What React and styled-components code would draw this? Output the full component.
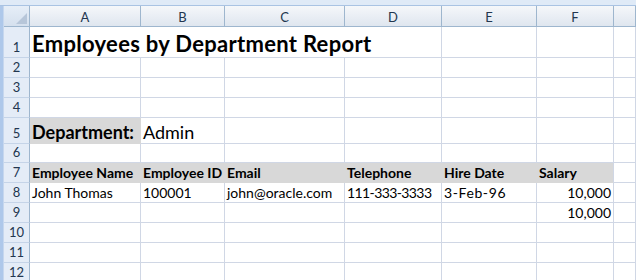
import React from "react";
import styled, { createGlobalStyle } from "styled-components";

const Global = createGlobalStyle`
  html, body { margin: 0; padding: 0; background: #ffffff; }
  body { font-family: "Lato", "Liberation Sans", sans-serif; overflow: hidden; }
  * { box-sizing: border-box; }
`;

const GRID = "#d0d7e5";
const HEAD_BORDER = "#9eb6ce";
const FILL = "#d8d8d8";

const Sheet = styled.div`
  display: grid;
  width: 636px;
  height: 280px;
  overflow: hidden;
  grid-template-columns: 4px 26px 111px 84px 120px 97px 95px 77px 1fr;
  grid-template-rows: 6px 21px 31px 20px 20px 20px 26px 19px 20px 20px 20px 20px 20px 20px;
`;

const TopStrip = styled.div`
  grid-column: 1 / -1;
  grid-row: 1;
  background: #dfeaf7;
  border-bottom: 1px solid #a9c3e3;
`;

const SideStrip = styled.div`
  grid-column: 1;
  grid-row: 2 / -1;
  background: #aec8ea;
  border-right: 1px solid #c6d7ee;
`;

const Corner = styled.div`
  position: relative;
  grid-column: 2;
  grid-row: 2;
  background: linear-gradient(#e6eef8, #d5e0ee);
  border-right: 1px solid ${HEAD_BORDER};
  border-bottom: 1px solid ${HEAD_BORDER};
`;

const CornerMark = styled.svg`
  position: absolute;
  right: 2px;
  bottom: 2px;
`;

const ColHead = styled.div`
  display: flex;
  align-items: center;
  justify-content: center;
  grid-row: 2;
  background: linear-gradient(#f5f7fa, #dfe6ef);
  border-right: 1px solid ${HEAD_BORDER};
  border-bottom: 1px solid ${HEAD_BORDER};
  color: #22364f;
  font-size: 13px;
  padding-top: 1px;
`;

const RowHead = styled.div`
  display: flex;
  align-items: flex-end;
  justify-content: center;
  grid-column: 2;
  background: #e4ecf7;
  border-right: 1px solid ${HEAD_BORDER};
  border-bottom: 1px solid #c5d4e8;
  color: #22364f;
  font-size: 13px;
  line-height: 1;
  padding-bottom: 3px;
`;

const Cell = styled.div`
  display: flex;
  align-items: flex-end;
  justify-content: ${(p) => (p.$right ? "flex-end" : "flex-start")};
  grid-column: ${(p) => (p.$span ? `span ${p.$span}` : "auto")};
  background: ${(p) => (p.$fill ? FILL : "#ffffff")};
  border-right: 1px solid ${(p) => (p.$fill && !p.$edge ? FILL : GRID)};
  border-bottom: 1px solid ${(p) => (p.$fill ? FILL : GRID)};
  padding: 0 2px 2px 2px;
  color: #000000;
  font-size: ${(p) => p.$size || 14}px;
  font-weight: ${(p) => (p.$bold ? 700 : 400)};
  letter-spacing: ${(p) => p.$track || 0}px;
  line-height: 1;
  white-space: nowrap;
  overflow: visible;
`;

const cols = ["A", "B", "C", "D", "E", "F", ""];
const blank = () => [{}, {}, {}, {}, {}, {}, {}];

const rows = [
  {
    n: 1,
    cells: [
      { t: "Employees by Department Report", bold: true, size: 22, track: 0.3, span: 4 },
      {}, {}, {},
    ],
  },
  { n: 2 },
  { n: 3 },
  { n: 4 },
  {
    n: 5,
    cells: [
      { t: "Department:", bold: true, size: 18, fill: true },
      { t: "Admin", size: 18 },
      {}, {}, {}, {}, {},
    ],
  },
  { n: 6 },
  {
    n: 7,
    cells: [
      { t: "Employee Name", bold: true, fill: true },
      { t: "Employee ID", bold: true, fill: true },
      { t: "Email", bold: true, fill: true },
      { t: "Telephone", bold: true, fill: true },
      { t: "Hire Date", bold: true, fill: true },
      { t: "Salary", bold: true, fill: true, edge: true },
      {},
    ],
  },
  {
    n: 8,
    cells: [
      { t: "John Thomas" },
      { t: "100001" },
      { t: "john@oracle.com" },
      { t: "111-333-3333", track: -0.6 },
      { t: "3-Feb-96", track: 0.6 },
      { t: "10,000", right: true },
      {},
    ],
  },
  { n: 9, cells: [{}, {}, {}, {}, {}, { t: "10,000", right: true }, {}] },
  { n: 10 },
  { n: 11 },
  { n: 12 },
];

export default function App() {
  return (
    <>
      <Global />
      <Sheet>
        <TopStrip />
        <SideStrip />
        <Corner>
          <CornerMark width="11" height="11" viewBox="0 0 11 11">
            <polygon points="11,0 11,11 0,11" fill="#b7c6d9" />
          </CornerMark>
        </Corner>
        {cols.map((c, i) => (
          <ColHead key={i}>{c}</ColHead>
        ))}
        {rows.map((r) => (
          <React.Fragment key={r.n}>
            <RowHead style={{ gridRow: r.n + 2 }}>{r.n}</RowHead>
            {(r.cells || blank()).map((c, i) => (
              <Cell
                key={i}
                style={{ gridRow: r.n + 2 }}
                $bold={c.bold}
                $size={c.size}
                $fill={c.fill}
                $edge={c.edge}
                $right={c.right}
                $span={c.span}
                $track={c.track}
              >
                {c.t}
              </Cell>
            ))}
          </React.Fragment>
        ))}
      </Sheet>
    </>
  );
}
